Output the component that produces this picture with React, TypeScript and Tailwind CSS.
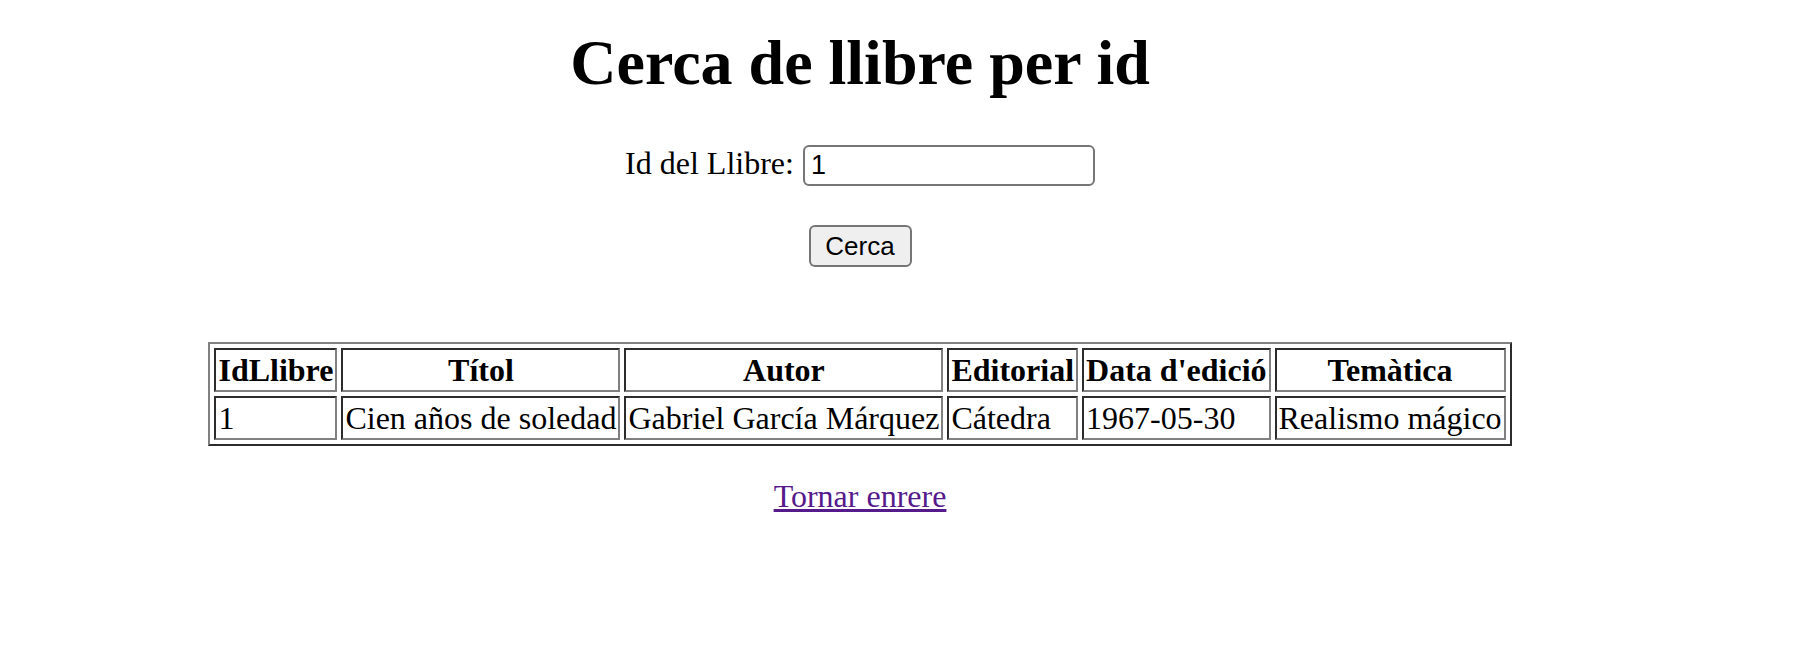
export default function App() {
  const rows = [
    {
      id: "1",
      titol: "Cien años de soledad",
      autor: "Gabriel García Márquez",
      editorial: "Cátedra",
      data: "1967-05-30",
      tematica: "Realismo mágico",
    },
  ];

  return (
    <div className="w-[1720px] min-h-[660px] bg-white flex flex-col items-center font-['Liberation_Serif',serif] text-[32px] text-black">

      <h1 className="mt-[26px] text-[64px] font-bold leading-[74px]">
        Cerca de llibre per id
      </h1>

      <div className="mt-[45px] flex items-start">
        <label className="leading-[37px]">Id del Llibre:</label>
        <input
          type="text"
          defaultValue="1"
          className="ml-[9px] h-[41px] w-[292px] rounded-[6px] border-2 border-[#767676] bg-white px-[6px] font-['Liberation_Sans',Arial,sans-serif] text-[27px] text-black outline-none"
        />
      </div>

      <button className="mt-[39px] h-[42px] w-[103px] rounded-[6px] border-2 border-[#767676] bg-[#efefef] font-['Liberation_Sans',Arial,sans-serif] text-[26px] leading-none text-black">
        Cerca
      </button>

      <table className="mt-[75px] border-separate border-spacing-[4px] border-2 border-[gray] leading-[36px] [border-style:outset]">
        <thead>
          <tr>
            <th className="border-2 border-[gray] p-[2px] [border-style:inset]">IdLlibre</th>
            <th className="border-2 border-[gray] p-[2px] [border-style:inset]">Títol</th>
            <th className="border-2 border-[gray] p-[2px] [border-style:inset]">Autor</th>
            <th className="border-2 border-[gray] p-[2px] [border-style:inset]">Editorial</th>
            <th className="border-2 border-[gray] p-[2px] [border-style:inset]">Data d'edició</th>
            <th className="border-2 border-[gray] p-[2px] [border-style:inset]">Temàtica</th>
          </tr>
        </thead>
        <tbody>
          {rows.map((r) => (
            <tr key={r.id}>
              <td className="border-2 border-[gray] p-[2px] [border-style:inset]">{r.id}</td>
              <td className="border-2 border-[gray] p-[2px] [border-style:inset]">{r.titol}</td>
              <td className="border-2 border-[gray] p-[2px] [border-style:inset]">{r.autor}</td>
              <td className="border-2 border-[gray] p-[2px] [border-style:inset]">{r.editorial}</td>
              <td className="border-2 border-[gray] p-[2px] [border-style:inset]">{r.data}</td>
              <td className="border-2 border-[gray] p-[2px] [border-style:inset]">{r.tematica}</td>
            </tr>
          ))}
        </tbody>
      </table>

      <a href="#" className="mt-[32px] leading-[37px] text-[#551a8b] underline">
        Tornar enrere
      </a>

    </div>
  );
}
